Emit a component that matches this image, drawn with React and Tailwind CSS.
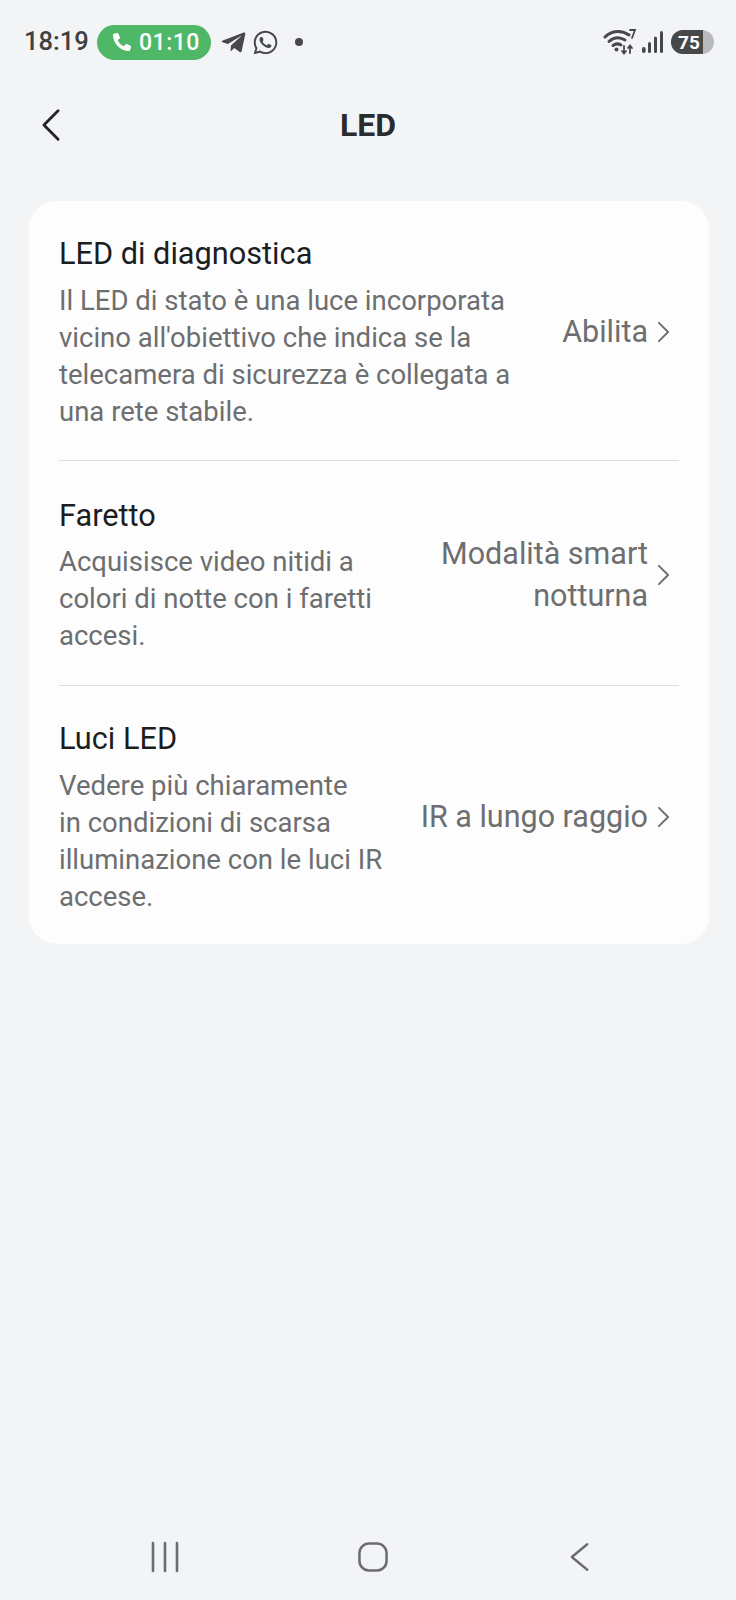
import React from "react";
import { FaTelegramPlane, FaWhatsapp, FaPhoneAlt } from "react-icons/fa";

const rows = [
  {
    title: "LED di diagnostica",
    lines: ["Il LED di stato è una luce incorporata", "vicino all'obiettivo che indica se la", "telecamera di sicurezza è collegata a", "una rete stabile."],
    value: ["Abilita"],
    pad: "pt-[34px] pb-[30px]",
  },
  {
    title: "Faretto",
    lines: ["Acquisisce video nitidi a", "colori di notte con i faretti", "accesi."],
    value: ["Modalità smart", "notturna"],
    pad: "pt-[36px] pb-[31px]",
  },
  {
    title: "Luci LED",
    lines: ["Vedere più chiaramente", "in condizioni di scarsa", "illuminazione con le luci IR", "accese."],
    value: ["IR a lungo raggio"],
    pad: "pt-[34px] pb-[29px]",
  },
];

function Chevron({ className, color = "#6b6c6e", width = 2, path = "M2 2 L12 12 L2 22" }) {
  return (
    <svg viewBox="0 0 14 24" className={className} fill="none" stroke={color} strokeWidth={width} strokeLinecap="round" strokeLinejoin="round">
      <path d={path} />
    </svg>
  );
}

function StatusBar() {
  return (
    <div className="flex items-center justify-between pl-6 pr-[22px] pt-[24px] h-[60px] text-[#3f4042]">
      <div className="flex items-center">
        <span className="text-[25.5px] font-medium leading-none w-[73px]">18:19</span>
        <div className="flex items-center h-[35px] w-[114px] rounded-full bg-[#4fb868] text-white pl-4">
          <FaPhoneAlt className="w-[18px] h-[18px]" />
          <span className="ml-2 text-[23px] font-medium leading-none tracking-[0.5px]">01:10</span>
        </div>
        <FaTelegramPlane className="ml-[9px] w-[27px] h-[27px] text-[#47484a]" />
        <FaWhatsapp className="ml-[5px] w-[27px] h-[27px] text-[#47484a]" />
        <div className="ml-[16px] w-2 h-2 rounded-full bg-[#47484a]" />
      </div>
      <div className="flex items-center">
        <svg viewBox="0 0 34 26" className="w-[34px] h-[26px]" fill="none" stroke="#47484a" strokeWidth="3" strokeLinecap="round">
          <path d="M2 8 C9 1 19 1 26 6" />
          <path d="M6 12.5 C11 8 17 8 22 11" />
          <path d="M10 16.5 C12.5 14.5 15.5 14.5 18 16" />
          <circle cx="13.5" cy="20.5" r="2" fill="#47484a" stroke="none" />
          <path d="M21 17 V24 M19 22 L21 24.5 L23 22 M27 24 V17 M25 19 L27 16.5 L29 19" strokeWidth="1.8" />
          <path d="M27 1 H32 L29 9" strokeWidth="1.8" />
        </svg>
        <svg viewBox="0 0 22 24" className="ml-[5px] w-[22px] h-[24px]" fill="#47484a">
          <rect x="0" y="17" width="3.6" height="6" rx="1.8" />
          <rect x="6" y="12" width="3" height="11" rx="1.5" />
          <rect x="12" y="6.5" width="3" height="16.5" rx="1.5" />
          <rect x="18" y="1" width="3" height="22" rx="1.5" />
        </svg>
        <div className="relative ml-[7px] h-[24px] w-[43px] rounded-full overflow-hidden bg-[#b9babc]">
          <div className="h-full w-[32px] bg-[#47484a] flex items-center justify-center pl-1">
            <span className="text-white text-[19px] font-bold leading-none">75</span>
          </div>
        </div>
      </div>
    </div>
  );
}

function Row({ row, last }) {
  return (
    <div className={`flex items-center ${last ? "" : "border-b border-[#dcddde]"} ${row.pad}`}>
      <div className="flex-1">
        <div className="text-[30.7px] leading-[38px] text-[#1c1d1f] mb-[8.5px]">{row.title}</div>
        <div className="text-[27.5px] leading-[37px] text-[#6d6e70]">
          {row.lines.map((l) => (
            <div key={l} className="whitespace-nowrap">{l}</div>
          ))}
        </div>
      </div>
      <div className="flex items-center">
        <div className="text-right text-[30.5px] leading-[42px] text-[#6d6e70] whitespace-nowrap">
          {row.value.map((v) => (
            <div key={v}>{v}</div>
          ))}
        </div>
        <Chevron className="ml-[9px] mr-[9px] w-[13px] h-[22px]" />
      </div>
    </div>
  );
}

export default function App() {
  return (
    <div className="relative w-[736px] h-[1600px] bg-[#f3f4f6] flex flex-col font-['Roboto',sans-serif]">
      <StatusBar />
      <div className="relative flex items-center justify-center h-[66px] mt-[32px]">
        <Chevron className="absolute left-[41px] top-[16px] w-[20px] h-[34px]" color="#232426" width={2} path="M12 2 L2 12 L12 22" />
        <span className="text-[32px] font-bold text-[#2a2b2d]">LED</span>
      </div>
      <div className="ml-[29px] w-[680px] mt-[43px] bg-[#fdfdfd] rounded-[28px] px-[30px]">
        {rows.map((r, i) => (
          <Row key={r.title} row={r} last={i === rows.length - 1} />
        ))}
      </div>
      <div className="mt-auto h-[76px] flex items-start justify-between pl-[151px] pr-[146px] pt-[17px]">
        <svg viewBox="0 0 28 32" className="w-[28px] h-[32px]" stroke="#6b6c6e" strokeWidth="2.6" strokeLinecap="round">
          <path d="M2 2 V30 M14 2 V30 M26 2 V30" />
        </svg>
        <svg viewBox="0 0 32 32" className="w-[31px] h-[32px] -translate-x-[1.5px]" fill="none" stroke="#6b6c6e" strokeWidth="2.6">
          <rect x="2" y="2" width="28" height="28" rx="10" />
        </svg>
        <svg viewBox="0 0 22 32" className="w-[20px] h-[32px]" fill="none" stroke="#6b6c6e" strokeWidth="2.6" strokeLinecap="round" strokeLinejoin="round">
          <path d="M19 2 L2 16 L19 30" />
        </svg>
      </div>
    </div>
  );
}
